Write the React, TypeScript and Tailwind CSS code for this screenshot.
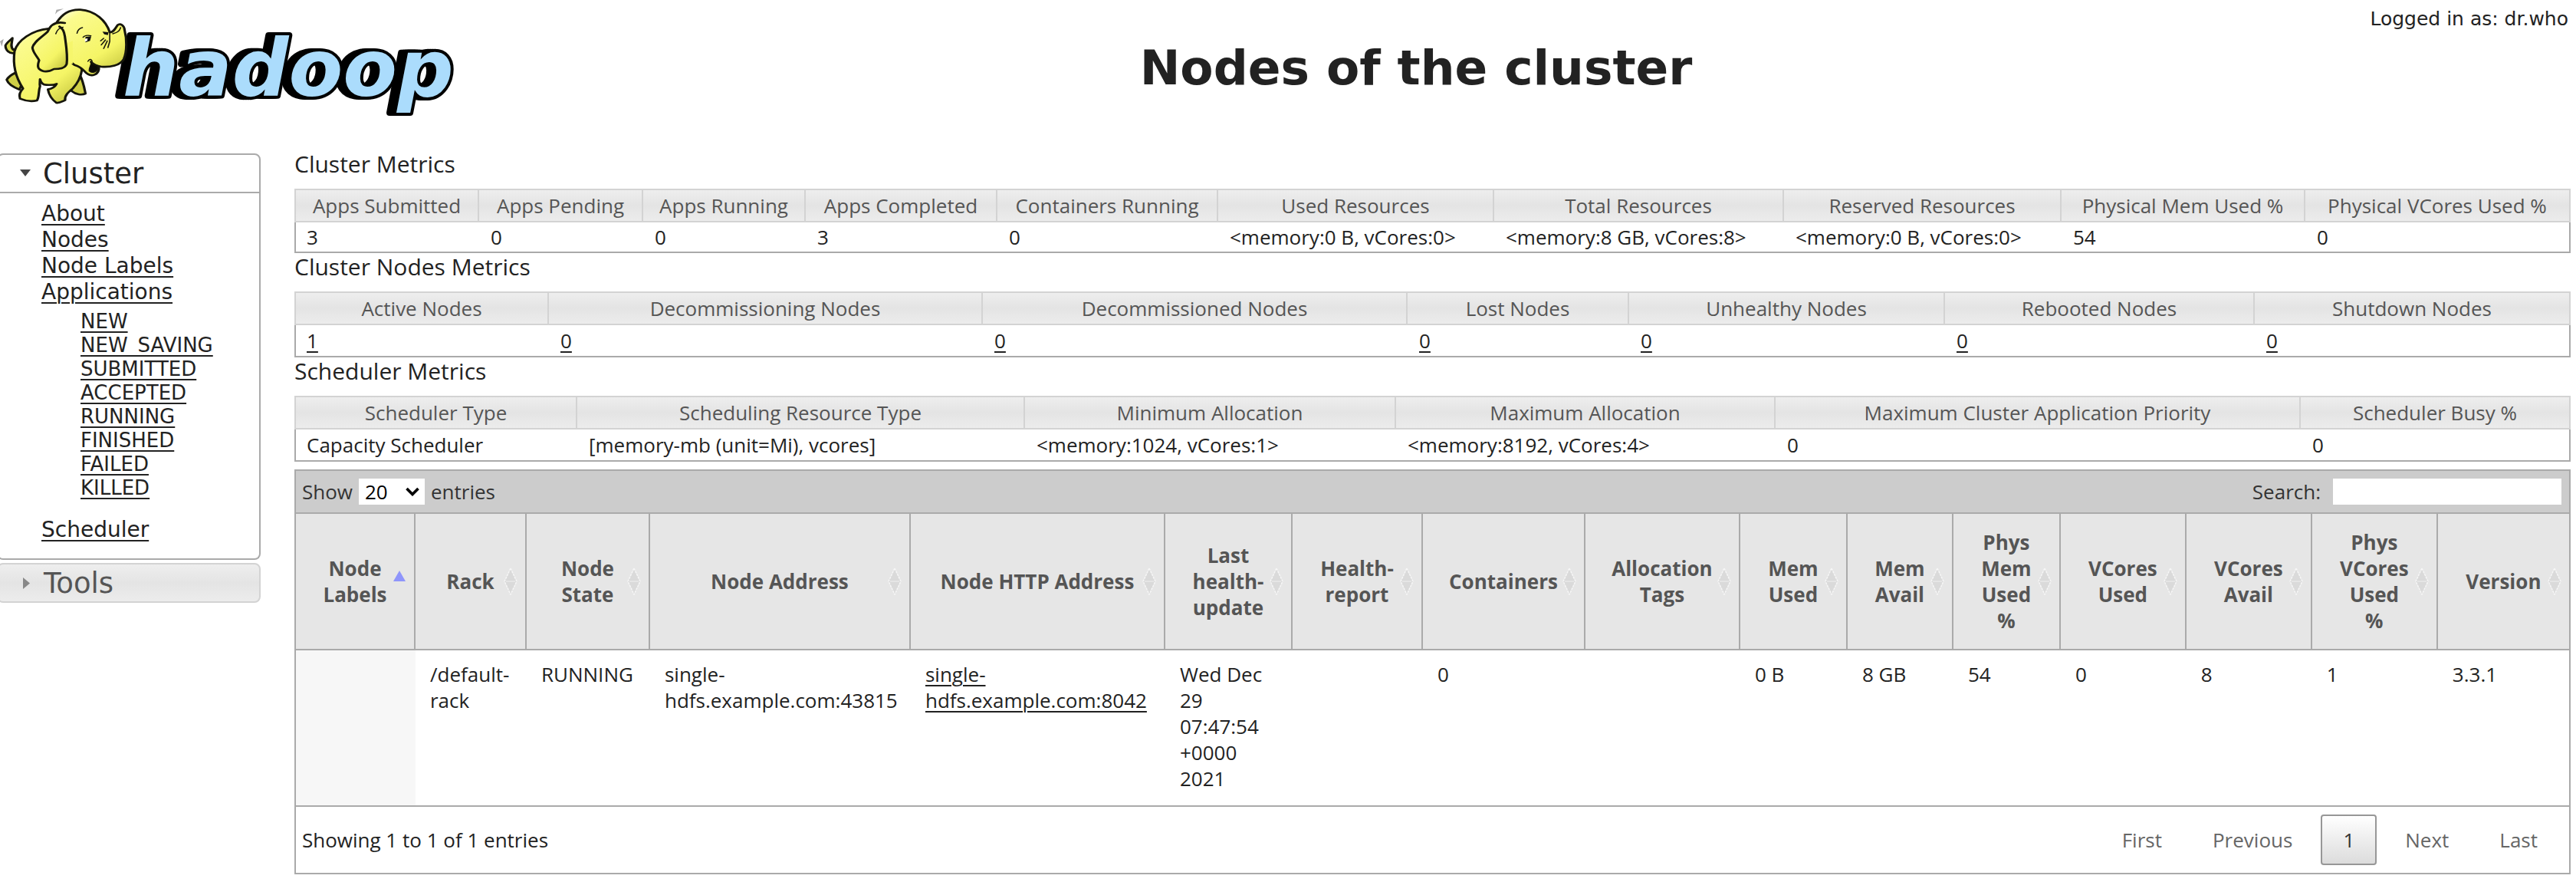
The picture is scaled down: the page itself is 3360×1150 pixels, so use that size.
import React from "react";

type Metric = { label: string; value: string; width: number };

const clusterMetrics: Metric[] = [
  { label: "Apps Submitted", value: "3", width: 241 },
  { label: "Apps Pending", value: "0", width: 214 },
  { label: "Apps Running", value: "0", width: 212 },
  { label: "Apps Completed", value: "3", width: 250 },
  { label: "Containers Running", value: "0", width: 288 },
  { label: "Used Resources", value: "<memory:0 B, vCores:0>", width: 360 },
  { label: "Total Resources", value: "<memory:8 GB, vCores:8>", width: 378 },
  { label: "Reserved Resources", value: "<memory:0 B, vCores:0>", width: 362 },
  { label: "Physical Mem Used %", value: "54", width: 318 },
  { label: "Physical VCores Used %", value: "0", width: 346 },
];

const nodeMetrics: Metric[] = [
  { label: "Active Nodes", value: "1", width: 332 },
  { label: "Decommissioning Nodes", value: "0", width: 566 },
  { label: "Decommissioned Nodes", value: "0", width: 554 },
  { label: "Lost Nodes", value: "0", width: 289 },
  { label: "Unhealthy Nodes", value: "0", width: 412 },
  { label: "Rebooted Nodes", value: "0", width: 404 },
  { label: "Shutdown Nodes", value: "0", width: 412 },
];

const schedulerMetrics: Metric[] = [
  { label: "Scheduler Type", value: "Capacity Scheduler", width: 369 },
  { label: "Scheduling Resource Type", value: "[memory-mb (unit=Mi), vcores]", width: 584 },
  { label: "Minimum Allocation", value: "<memory:1024, vCores:1>", width: 484 },
  { label: "Maximum Allocation", value: "<memory:8192, vCores:4>", width: 495 },
  { label: "Maximum Cluster Application Priority", value: "0", width: 685 },
  { label: "Scheduler Busy %", value: "0", width: 352 },
];

const nodeColumns: Metric[] = [
  { label: "Node\nLabels", value: "", width: 156 },
  { label: "Rack", value: "/default-\nrack", width: 145 },
  { label: "Node\nState", value: "RUNNING", width: 161 },
  { label: "Node Address", value: "single-\nhdfs.example.com:43815", width: 340 },
  { label: "Node HTTP Address", value: "single-\nhdfs.example.com:8042", width: 332 },
  { label: "Last\nhealth-\nupdate", value: "Wed Dec\n29\n07:47:54\n+0000\n2021", width: 166 },
  { label: "Health-\nreport", value: "", width: 170 },
  { label: "Containers", value: "0", width: 212 },
  { label: "Allocation\nTags", value: "", width: 202 },
  { label: "Mem\nUsed", value: "0 B", width: 140 },
  { label: "Mem\nAvail", value: "8 GB", width: 138 },
  { label: "Phys\nMem\nUsed\n%", value: "54", width: 140 },
  { label: "VCores\nUsed", value: "0", width: 164 },
  { label: "VCores\nAvail", value: "8", width: 164 },
  { label: "Phys\nVCores\nUsed\n%", value: "1", width: 164 },
  { label: "Version", value: "3.3.1", width: 171 },
];

const appStates = ["NEW", "NEW_SAVING", "SUBMITTED", "ACCEPTED", "RUNNING", "FINISHED", "FAILED", "KILLED"];

const link = "underline decoration-2 underline-offset-4";

function Columns({ items }: { items: Metric[] }) {
  const total = items.reduce((sum, item) => sum + item.width, 0);
  return (
    <colgroup>
      {items.map((item) => (
        <col key={item.label} style={{ width: `${(item.width / total) * 100}%` }} />
      ))}
    </colgroup>
  );
}

function MetricsTable({ title, items, linked = false, compact = false }: { title: string; items: Metric[]; linked?: boolean; compact?: boolean }) {
  return (
    <section>
      <h2 className="mb-3.5 text-[30px] leading-9">{title}</h2>
      <table aria-label={title} className="w-full table-fixed border-separate border-spacing-0">
        <Columns items={items} />
        <thead>
          <tr className="h-11">
            {items.map((item) => (
              <th
                key={item.label}
                scope="col"
                className="border-y-2 border-r-2 border-[#d3d3d3] bg-linear-to-b from-[#eeeeee] via-[#e4e4e4] to-[#ececec] p-0 text-center font-normal whitespace-nowrap text-[#555555] first:border-l-2"
              >
                {item.label}
              </th>
            ))}
          </tr>
        </thead>
        <tbody>
          <tr className={compact ? "h-10" : "h-[42px]"}>
            {items.map((item) => (
              <td key={item.label} className="border-b-2 border-[#aaaaaa] py-0 pl-[15px] whitespace-nowrap first:border-l-2 first:pl-3.5 last:border-r-2">
                {linked ? (
                  <a href="#nodes" className={link}>
                    {item.value}
                  </a>
                ) : (
                  item.value
                )}
              </td>
            ))}
          </tr>
        </tbody>
      </table>
    </section>
  );
}

function SortIcon({ ascending }: { ascending: boolean }) {
  return (
    <svg viewBox="0 0 18 36" className="absolute top-1/2 right-2.5 h-9 w-[18px] -translate-y-1/2" aria-hidden="true">
      {ascending ? (
        <path d="M9 4 L17 18 H1 Z" fill="#8f95fb" />
      ) : (
        <g fill="#dadada">
          <path d="M9 1 L17 18 L9 35 L1 18 Z" stroke="#f6f6f6" strokeWidth="1.5" strokeDasharray="3 1" />
          <path d="M3 18 H15" stroke="#e8e8e8" strokeWidth="1.5" />
        </g>
      )}
    </svg>
  );
}

function Logo() {
  return (
    <svg viewBox="0 0 600 170" className="h-[170px] w-[600px]" role="img" aria-label="Hadoop">
      <defs>
        <linearGradient id="skin" x1="0" y1="0" x2="0.7" y2="1">
          <stop offset="0" stopColor="#fffff0" />
          <stop offset="0.2" stopColor="#fbfb8e" />
          <stop offset="0.75" stopColor="#f5f566" />
          <stop offset="1" stopColor="#cfcf46" />
        </linearGradient>
      </defs>
      <text
        x="160"
        y="125"
        fontFamily="DejaVu Sans"
        fontWeight="700"
        fontStyle="italic"
        fontSize="103"
        fill="#abdcfc"
        stroke="#000"
        strokeWidth="8"
        strokeLinejoin="round"
        paintOrder="stroke"
        className="[filter:drop-shadow(-3px_0_0_#000)_drop-shadow(-6px_0_0_#000)]"
      >
        hadoop
      </text>
      <g transform="scale(0.3954 0.3333)" fill="url(#skin)" stroke="#16160c" strokeLinejoin="round" strokeLinecap="round">
        <g strokeWidth="8">
          <path d="M50 207 C30 212 18 196 18 178 C22 166 34 158 41 149 C40 168 33 180 43 194 L54 192 Z" fill="#d8d84c" />
          <path d="M50 285 C38 292 28 300 22 312 C26 326 36 338 64 350 L74 325 Z" fill="#cfcf46" />
          <path d="M262 290 C274 315 278 342 282 366 C270 373 250 370 236 356 L232 325 Z" fill="#cfcf46" />
          <path d="M160 112 C105 118 58 158 48 200 C42 250 50 300 76 346 C66 358 62 372 66 386 C82 394 104 398 122 393 C130 380 126 356 132 338 C130 325 132 318 132 310 C136 326 142 332 152 332 C164 332 176 334 187 328 C180 344 168 348 158 350 C162 374 174 392 186 402 C196 404 206 396 215 392 C212 374 226 360 240 346 C256 326 266 304 270 275 L250 160 Z" />
          <path d="M188 86 C205 58 225 36 265 38 C315 42 350 82 362 126 C374 128 380 112 388 98 C396 90 410 98 411 118 C418 150 420 200 408 232 C396 256 364 264 334 261 C320 258 308 252 300 242 C310 262 330 254 326 272 C322 292 304 300 290 290 C276 282 278 266 246 254 L185 200 Z" />
        </g>
        <path d="M240 249 L184 268 L182 190 L240 160 Z" fill="#f6f66c" stroke="none" />
        <path d="M214 90 C190 84 168 92 157 124 C138 146 112 162 107 186 C108 206 124 222 129 236 C126 248 122 258 128 268 C142 284 160 282 178 270 C196 270 214 268 220 250 C224 218 218 178 214 142 C212 126 206 110 196 104" strokeWidth="8" />
        <path d="M300 246 C310 258 326 256 324 268 C320 280 306 290 294 278 C292 266 300 258 300 246 Z" fill="#0b0b06" strokeWidth="3" />
        <g fill="none" strokeWidth="4">
          <path d="M184 132 C188 118 198 108 208 106" />
          <path d="M254 130 C256 118 264 110 272 108" />
          <path d="M274 146 C278 140 288 136 300 140" />
          <path d="M290 240 C296 228 302 232 304 240" />
          <path d="M332 160 L342 150 M334 176 L348 156 M342 190 L354 160 M356 186 L362 162 M362 130 V162" />
          <path d="M372 132 C384 128 394 124 398 108" />
        </g>
        <path d="M282 144 L301 142 L297 160 L282 166 Z" fill="#111" stroke="none" />
        <path d="M280 152 L289 150 L288 160 L280 163 Z" fill="#fff" stroke="none" />
        <path d="M338 124 L358 126 L356 137 L344 134 Z" fill="#111" stroke="none" />
        <path d="M182 56 L186 38 L210 34 L190 46 Z M0 162 L12 152 L6 182 Z" fill="#aaa" stroke="none" />
      </g>
    </svg>
  );
}

function Sidebar() {
  return (
    <nav aria-label="Main" className="-ml-1 w-[344px] shrink-0 pt-1 font-['DejaVu_Sans',Verdana,sans-serif]">
      <h3 className="rounded-t-lg border-2 border-[#aaaaaa]">
        <button type="button" aria-expanded="true" className="flex h-12 w-full items-center gap-4 pl-7 text-[37px] leading-none">
          <svg viewBox="0 0 14 10" className="h-2.5 w-3.5" aria-hidden="true">
            <path d="M0 0 H14 L7 9 Z" fill="#454545" />
          </svg>
          Cluster
        </button>
      </h3>
      <div className="rounded-b-lg border-2 border-t-0 border-[#aaaaaa] pt-2.5 pb-5 pl-14 text-[28px] leading-[34px]">
        <ul>
          <li><a href="#about" className={link}>About</a></li>
          <li><a href="#nodes" className={link}>Nodes</a></li>
          <li><a href="#labels" className={link}>Node Labels</a></li>
          <li>
            <a href="#applications" className={link}>Applications</a>
            <ul className="pt-1.5 pb-[22px] pl-[51px] text-[26px] leading-[31px]">
              {appStates.map((state) => (
                <li key={state}><a href={`#${state}`} className={link}>{state}</a></li>
              ))}
            </ul>
          </li>
          <li><a href="#scheduler" className={link}>Scheduler</a></li>
        </ul>
      </div>
      <h3 className="mt-1 rounded-lg border-2 border-[#d3d3d3] bg-linear-to-b from-[#eeeeee] via-[#e4e4e4] to-[#ececec] text-[#555555]">
        <button type="button" aria-expanded="false" className="flex h-12 w-full items-center gap-[18px] pl-8 text-[37px] leading-none">
          <svg viewBox="0 0 9 15" className="h-[15px] w-[9px]" aria-hidden="true">
            <path d="M0 0 V15 L9 7.5 Z" fill="#888888" />
          </svg>
          Tools
        </button>
      </h3>
    </nav>
  );
}

function NodesTable() {
  return (
    <section className="mt-2.5 border-2 border-[#aaaaaa]">
      <div className="flex h-[54px] items-center justify-between bg-[#cccccc] pr-2.5 pl-2 text-[#333333]">
        <label className="flex items-center gap-2">
          Show
          <span className="relative">
            <select defaultValue="20" className="block h-[34px] w-[86px] appearance-none bg-white pl-2 leading-8 text-black">
              <option>20</option>
              <option>40</option>
              <option>60</option>
            </select>
            <svg viewBox="0 0 20 12" className="pointer-events-none absolute top-[11px] right-1.5 h-3 w-5" aria-hidden="true">
              <path d="M2.5 2 L10 9.5 L17.5 2" fill="none" stroke="#000" strokeWidth="3.6" />
            </svg>
          </span>
          entries
        </label>
        <label className="flex items-center gap-4">
          Search:
          <input type="text" className="h-[34px] w-[298px] bg-white px-2 text-black" />
        </label>
      </div>
      <table aria-label="Nodes" className="w-full table-fixed border-separate border-spacing-0">
        <Columns items={nodeColumns} />
        <thead>
          <tr className="h-[180px]">
            {nodeColumns.map((column, i) => (
              <th
                key={column.label}
                scope="col"
                aria-sort={i === 0 ? "ascending" : "none"}
                className="relative border-y-2 border-r-2 border-[#aaaaaa] bg-[#e6e6e6] p-0 text-center leading-[34px] font-bold whitespace-pre-line text-[#555555] last:border-r-0"
              >
                {column.label}
                <SortIcon ascending={i === 0} />
              </th>
            ))}
          </tr>
        </thead>
        <tbody>
          <tr className="h-[204px] align-top">
            {nodeColumns.map((column) => (
              <td key={column.label} className="border-b-2 border-[#aaaaaa] pt-3.5 pl-[19px] leading-[34px] whitespace-pre-line first:bg-[#f7f7f7]">
                {column.label === "Node HTTP Address" ? (
                  <a href="#node" className={link}>{column.value}</a>
                ) : (
                  column.value
                )}
              </td>
            ))}
          </tr>
        </tbody>
      </table>
      <div className="flex h-[86px] items-center justify-between pr-3 pl-2">
        <p>Showing 1 to 1 of 1 entries</p>
        <div className="flex gap-2 text-[#666666]">
          <button type="button" className="border-2 border-transparent px-[27px]">First</button>
          <button type="button" className="border-2 border-transparent px-[27px]">Previous</button>
          <button type="button" aria-current="page" className="h-[66px] rounded-sm border-2 border-[#979797] bg-linear-to-b from-white to-[#dcdcdc] px-[27px] text-[#333333]">1</button>
          <button type="button" className="border-2 border-transparent px-[27px]">Next</button>
          <button type="button" className="border-2 border-transparent px-[27px]">Last</button>
        </div>
      </div>
    </section>
  );
}

export default function App() {
  return (
    <div className="min-h-screen bg-white text-[#222222]">
      <header className="grid h-[196px] grid-cols-[600px_1fr_266px] font-['DejaVu_Sans',Verdana,sans-serif]">
        <Logo />
        <h1 className="pt-[50px] text-center text-[63px] leading-[78px] font-bold">Nodes of the cluster</h1>
        <p className="justify-self-end pt-[9px] pr-2.5 text-[25px] leading-8 whitespace-nowrap">Logged in as: dr.who</p>
      </header>
      <div className="flex gap-11">
        <Sidebar />
        <main className="min-w-0 flex-1 pr-[7px] font-['Open_Sans','Noto_Sans',sans-serif] text-[26px] leading-8">
          <MetricsTable title="Cluster Metrics" items={clusterMetrics} compact />
          <MetricsTable title="Cluster Nodes Metrics" items={nodeMetrics} linked />
          <MetricsTable title="Scheduler Metrics" items={schedulerMetrics} />
          <NodesTable />
        </main>
      </div>
    </div>
  );
}
